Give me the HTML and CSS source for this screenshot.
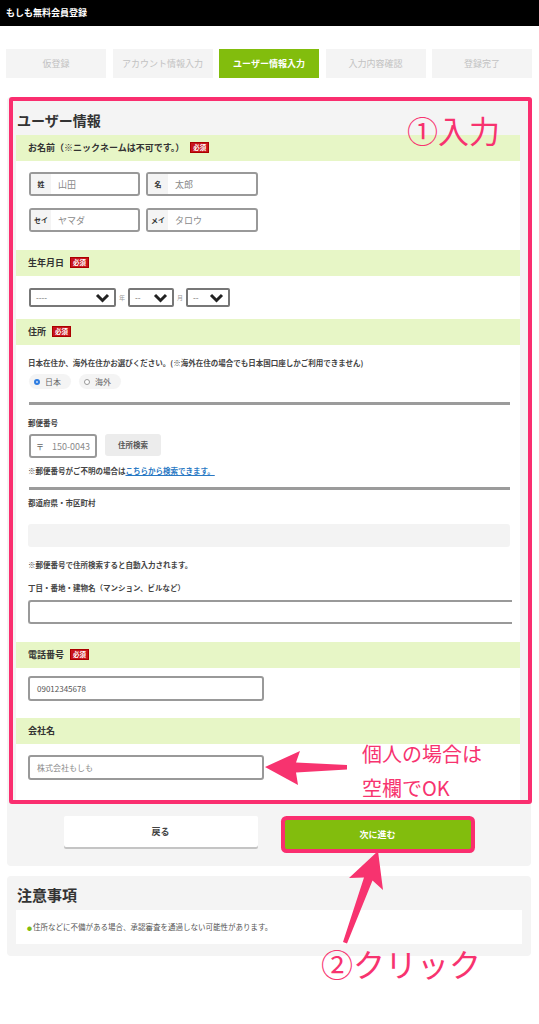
FILE: index.html
```html
<!DOCTYPE html>
<html lang="ja">
<head>
  <meta charset="UTF-8" />
  <meta name="viewport" content="width=device-width, initial-scale=1.0"/>
  <title>もしも無料会員登録</title>
  <link rel="stylesheet" href="styles.css">
</head>
<body>
  <header class="topbar">もしも無料会員登録</header>

  <nav class="steps">
    <div class="step">仮登録</div>
    <div class="step">アカウント情報入力</div>
    <div class="step step-active">ユーザー情報入力</div>
    <div class="step">入力内容確認</div>
    <div class="step">登録完了</div>
  </nav>

  <div class="card">
    <div class="highlight">
      <h2 class="form-title">ユーザー情報</h2>

      <div class="band">お名前（※ニックネームは不可です。）<span class="badge">必須</span></div>
      <div class="block block-name">
        <div class="name-row">
          <div class="name-field"><span class="prefix">姓</span><span class="value">山田</span></div>
          <div class="name-field wide"><span class="prefix">名</span><span class="value">太郎</span></div>
        </div>
        <div class="name-row">
          <div class="name-field"><span class="prefix">セイ</span><span class="value">ヤマダ</span></div>
          <div class="name-field wide"><span class="prefix">メイ</span><span class="value">タロウ</span></div>
        </div>
      </div>

      <div class="band">生年月日<span class="badge">必須</span></div>
      <div class="block block-birth">
        <div class="birth-row">
          <div class="select select-year"><span>----</span>
            <svg width="15" height="10" viewBox="0 0 15 10"><path d="M2 2 L7.5 7.5 L13 2" fill="none" stroke="#222" stroke-width="3"/></svg>
          </div>
          <span class="unit">年</span>
          <div class="select select-month"><span>--</span>
            <svg width="15" height="10" viewBox="0 0 15 10"><path d="M2 2 L7.5 7.5 L13 2" fill="none" stroke="#222" stroke-width="3"/></svg>
          </div>
          <span class="unit">月</span>
          <div class="select select-day"><span>--</span>
            <svg width="15" height="10" viewBox="0 0 15 10"><path d="M2 2 L7.5 7.5 L13 2" fill="none" stroke="#222" stroke-width="3"/></svg>
          </div>
        </div>
      </div>

      <div class="band">住所<span class="badge">必須</span></div>
      <div class="block block-address">
        <p class="small">日本在住か、海外在住かお選びください。(※海外在住の場合でも日本国口座しかご利用できません)</p>
        <div class="radios">
          <span class="radio"><span class="dot checked"></span>日本</span>
          <span class="radio"><span class="dot"></span>海外</span>
        </div>
        <div class="rule"></div>

        <p class="small label-zip">郵便番号</p>
        <div class="zip-row">
          <div class="zip-field"><span class="prefix">〒</span><span class="value">150-0043</span></div>
          <div class="zip-btn">住所検索</div>
        </div>
        <p class="small note-zip">※郵便番号がご不明の場合は<a href="#" class="link">こちらから検索できます。</a></p>
        <div class="rule rule-2"></div>

        <p class="small label-pref">都道府県・市区町村</p>
        <div class="readonly"></div>
        <p class="small note-auto">※郵便番号で住所検索すると自動入力されます。</p>
        <p class="small label-street">丁目・番地・建物名（マンション、ビルなど）</p>
        <div class="street"></div>
      </div>

      <div class="band">電話番号<span class="badge">必須</span></div>
      <div class="block block-phone">
        <div class="text-field filled">09012345678</div>
      </div>

      <div class="band">会社名</div>
      <div class="block block-company">
        <div class="text-field">株式会社もしも</div>
      </div>
    </div>

    <div class="actions">
      <button class="btn btn-back">戻る</button>
      <button class="btn btn-next">次に進む</button>
    </div>
  </div>

  <div class="notice">
    <h3 class="notice-title">注意事項</h3>
    <div class="notice-body"><span class="bullet">●</span>住所などに不備がある場合、承認審査を通過しない可能性があります。</div>
  </div>

  <!-- annotations -->
  <div class="note-text note-input">①入力</div>
  <div class="note-text note-company">個人の場合は<br>空欄でOK</div>
  <div class="note-text note-click">②クリック</div>
  <svg class="arrows" width="539" height="1024" viewBox="0 0 539 1024">
    <polygon fill="#f7336f" points="265,767 300,751 296,762.5 347,765 347,769.5 296,772.5 298,785"/>
    <polygon fill="#f7336f" points="378,851 349,878 364,877.5 343,942 347,943.5 372.5,880.5 383,890"/>
  </svg>
</body>
</html>
```

FILE: styles.css
```css
body {
  margin: 0;
  background: #fff;
  font-family: "Noto Sans CJK JP", "Noto Sans", sans-serif;
  color: #333;
  position: relative;
  min-height: 1024px;
}

p {
  margin: 0;
}

.topbar {
  height: 26px;
  line-height: 26px;
  background: #000;
  color: #fff;
  font-size: 9px;
  font-weight: bold;
  padding-left: 6px;
}

.steps {
  display: flex;
  gap: 6.5px;
  margin-top: 23px;
  padding: 0 7px 0 6px;
}

.step {
  flex: 1;
  height: 29px;
  line-height: 29px;
  background: #f4f4f4;
  color: #c2c2c2;
  font-size: 9px;
  text-align: center;
}

.step-active {
  background: #82bd0d;
  color: #fff;
  font-weight: bold;
}

.card {
  margin: 19px 8px 0 7px;
  background: #f4f4f4;
  border-radius: 4px;
}

.highlight {
  margin: 0 -1px 0 2px;
  border: 4px solid #fa2e6f;
  border-radius: 3px;
  padding: 0 8px 0 3px;
}

.form-title {
  margin: 0;
  height: 34px;
  line-height: 38px;
  font-size: 14px;
  font-weight: bold;
  padding-left: 1px;
}

.band {
  height: 26px;
  line-height: 26px;
  background: #e7f6c6;
  padding-left: 12px;
  font-size: 9px;
  font-weight: bold;
}

.badge {
  display: inline-block;
  vertical-align: middle;
  margin: -2px 0 0 6px;
  background: #c8141c;
  color: #fff;
  font-size: 6.5px;
  line-height: 9px;
  padding: 0 2px;
  border: 1px solid #a00;
}

.block {
  background: #fff;
  padding: 11px 10px 18px 12px;
}

/* name */
.name-row {
  display: flex;
  gap: 6px;
}

.name-row + .name-row {
  margin-top: 12px;
}

.name-field {
  width: 111px;
  height: 24px;
  box-sizing: border-box;
  display: flex;
  align-items: center;
  border: 2px solid #999;
  border-radius: 3px;
  overflow: hidden;
  margin-left: 1px;
}

.name-field.wide {
  width: 112px;
  margin-left: 0;
}

.name-field .prefix {
  align-self: stretch;
  width: 20px;
  background: #f4f4f4;
  font-size: 7px;
  font-weight: bold;
  display: flex;
  align-items: center;
  justify-content: center;
}

.name-field .value,
.zip-field .value {
  padding-left: 7px;
  font-size: 9px;
  color: #8a8a8a;
}

/* birthday */
.block-birth {
  padding: 12px 10px 12px 13px;
}

.birth-row {
  display: flex;
  align-items: center;
}

.select {
  height: 19px;
  box-sizing: border-box;
  border: 2px solid #777;
  border-radius: 2px;
  display: flex;
  align-items: center;
  justify-content: space-between;
  padding: 0 4px 0 5px;
  font-size: 8px;
  color: #666;
}

.select-year { width: 87px; }
.select-month { width: 46px; }
.select-day { width: 44px; }

.unit {
  width: 12px;
  text-align: center;
  font-size: 6px;
  color: #999;
}

/* address */
.block-address {
  padding-top: 12px;
}

.small {
  font-size: 7.5px;
  line-height: 12px;
  font-weight: bold;
  color: #444;
}

.radios {
  display: flex;
  gap: 8px;
  margin-top: 5px;
  margin-left: 1px;
}

.radio {
  display: flex;
  align-items: center;
  gap: 5px;
  height: 15px;
  padding: 0 10px 0 5px;
  background: #f4f4f4;
  border-radius: 8px;
  font-size: 8px;
  color: #666;
}

.dot {
  width: 6px;
  height: 6px;
  border: 1px solid #999;
  border-radius: 50%;
  box-sizing: border-box;
  background: #fff;
}

.dot.checked {
  border: 2px solid #2f7de1;
  background: #2f7de1;
  box-shadow: inset 0 0 0 1px #fff;
}

.rule {
  height: 3px;
  background: #9b9b9b;
  margin: 13px 0 0 1px;
}

.label-zip {
  margin-top: 12px;
}

.zip-row {
  display: flex;
  gap: 8px;
  margin-top: 5px;
  margin-left: 1px;
}

.zip-field {
  width: 68px;
  height: 24px;
  box-sizing: border-box;
  border: 2px solid #999;
  border-radius: 3px;
  display: flex;
  align-items: center;
}

.zip-field .prefix {
  padding-left: 5px;
  font-size: 8px;
  color: #666;
}

.zip-field .value {
  padding-left: 8px;
}

.zip-btn {
  width: 56px;
  height: 22px;
  line-height: 22px;
  background: #ececec;
  border-radius: 3px;
  text-align: center;
  font-size: 7.5px;
  font-weight: bold;
  color: #555;
}

.note-zip {
  margin-top: 7px;
}

.link {
  color: #2a79c4;
  text-decoration: underline;
}

.rule-2 {
  margin-top: 10px;
}

.label-pref {
  margin-top: 7px;
}

.readonly {
  height: 23px;
  margin-top: 15px;
  background: #f3f3f3;
  border-radius: 3px;
}

.note-auto {
  margin-top: 12px;
}

.label-street {
  margin-top: 11px;
}

.street {
  height: 24px;
  box-sizing: border-box;
  margin-top: 6px;
  margin-right: -2px;
  border: 2px solid #999;
  border-right: none;
  border-radius: 3px 0 0 3px;
}

/* phone / company */
.block-phone {
  padding: 8px 12px 17px;
}

.block-company {
  padding: 11px 12px 20px;
}

.text-field {
  width: 236px;
  height: 25px;
  line-height: 21px;
  box-sizing: border-box;
  border: 2px solid #999;
  border-radius: 3px;
  padding-left: 7px;
  font-size: 8px;
  color: #8a8a8a;
}

.text-field.filled {
  color: #555;
}

/* buttons */
.actions {
  display: flex;
  justify-content: center;
  align-items: flex-start;
  gap: 27px;
  padding: 12px 4px 17px 0;
}

.btn {
  border: none;
  font-family: inherit;
  font-size: 9px;
  font-weight: bold;
  border-radius: 2px;
  cursor: pointer;
}

.btn-back {
  width: 194px;
  height: 31px;
  background: #fff;
  color: #444;
  box-shadow: 0 2px 0 #c4c4c4;
}

.btn-next {
  width: 186px;
  height: 29px;
  margin-top: 4px;
  background: #82bd0d;
  color: #fff;
  box-shadow: 0 0 0 4px #fa2e6f;
}

/* notice */
.notice {
  margin: 10px 8px 0 7px;
  background: #f4f4f4;
  border-radius: 4px;
  padding: 0 9px 12px;
}

.notice-title {
  margin: 0;
  height: 34px;
  padding-top: 4px;
  box-sizing: border-box;
  line-height: 30px;
  font-size: 15px;
  font-weight: bold;
  padding-left: 1px;
}

.notice-body {
  height: 34px;
  line-height: 34px;
  background: #fff;
  padding-left: 11px;
  font-size: 7.5px;
  color: #555;
}

.bullet {
  color: #82bd0d;
  font-size: 5px;
  margin-right: 1px;
}

/* annotations */
.note-text {
  position: absolute;
  color: #f7336f;
  font-weight: normal;
  white-space: nowrap;
}

.note-input {
  left: 407px;
  top: 112px;
  font-size: 31px;
  line-height: 36px;
}

.note-company {
  left: 362px;
  top: 737px;
  font-size: 20px;
  line-height: 34px;
}

.note-click {
  left: 321px;
  top: 943px;
  font-size: 32px;
  line-height: 40px;
}

.arrows {
  position: absolute;
  left: 0;
  top: 0;
  pointer-events: none;
}
```
